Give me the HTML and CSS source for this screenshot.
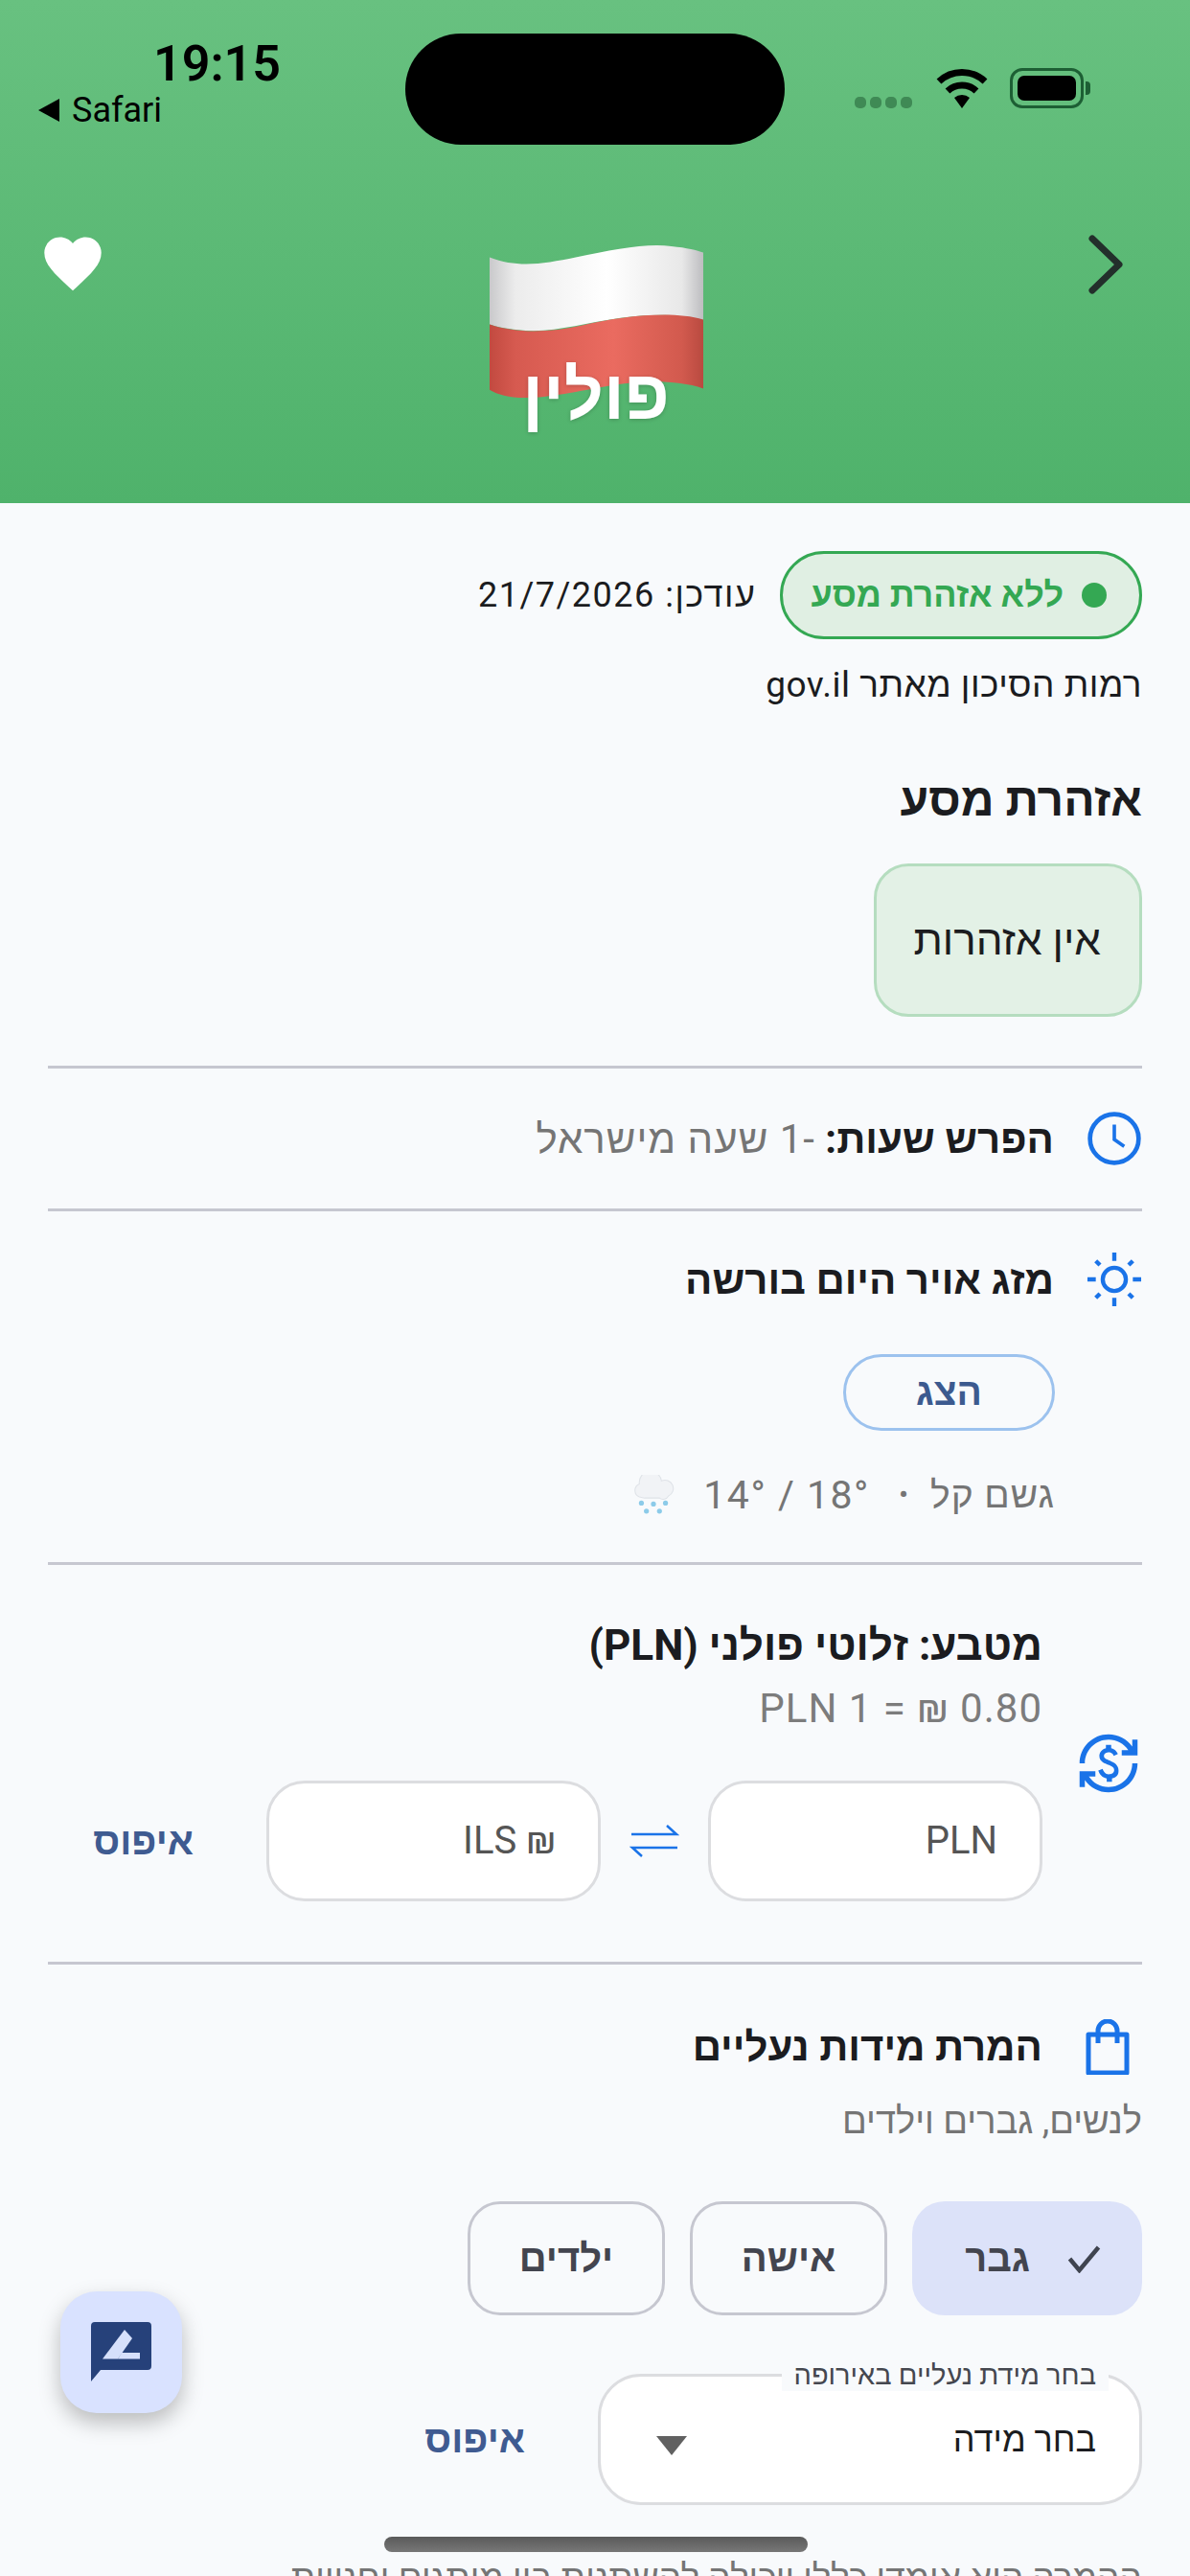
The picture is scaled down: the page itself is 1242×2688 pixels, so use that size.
FILE: index.html
```html
<!DOCTYPE html>
<html lang="he" dir="rtl">
<head>
	<meta charset="utf-8">
	<title>פולין</title>
	<link rel="stylesheet" href="styles.css">
</head>
<body>
<div class="page">
	<header class="top">
		<div class="statusbar">
			<div class="clock-side">
				<div class="time">19:15</div>
				<div class="backlink"><span class="back-tri"></span>Safari</div>
			</div>
			<div class="sys-icons">
				<div class="signal"><i></i><i></i><i></i><i></i></div>
				<svg class="wifi" viewBox="0 0 56 42"><path d="M28 42 20 31a12 12 0 0 1 16 0z" fill="#000"/><path d="M13 24a22 22 0 0 1 30 0" fill="none" stroke="#000" stroke-width="7"/><path d="M4 14a35 35 0 0 1 48 0" fill="none" stroke="#000" stroke-width="7"/></svg>
				<div class="battery"><div class="battery-in"></div></div>
				<div class="battery-nub"></div>
			</div>
		</div>
		<div class="island"></div>
		<div class="hero">
			<svg class="heart" viewBox="0 0 24 24"><path d="M12 22.500 10.300 21C4.600 15.700 0.500 12 0.500 7.300 0.500 3.700 3.400 1 6.800 1c2 0 3.900.9 5.200 2.500C13.300 1.900 15.200 1 17.200 1c3.400 0 6.300 2.700 6.300 6.300 0 4.700-4.100 8.400-9.800 13.700z" fill="#fff"/></svg>
			<div class="hero-mid">
				<svg class="flag" viewBox="210 105 670 485">
					<defs>
						<linearGradient id="fw" x1="0" x2="1" y1="0" y2="0">
							<stop offset="0" stop-color="#c9c9cb"/><stop offset=".12" stop-color="#ececec"/><stop offset=".55" stop-color="#fff"/><stop offset=".9" stop-color="#e8e8e8"/><stop offset="1" stop-color="#bdbdc0"/>
						</linearGradient>
						<linearGradient id="fr" x1="0" x2="1" y1="0" y2="0">
							<stop offset="0" stop-color="#c24a40"/><stop offset=".12" stop-color="#d65a50"/><stop offset=".58" stop-color="#ea6b60"/><stop offset=".9" stop-color="#d25a4e"/><stop offset="1" stop-color="#b94a40"/>
						</linearGradient>
					</defs>
					<path d="M210 145C300 180 380 165 480 145 600 120 700 100 780 110 830 115 860 122 880 130V345C800 320 720 322 620 335 500 352 400 385 300 372 260 368 230 362 210 355z" fill="url(#fw)"/>
					<path d="M210 355C300 385 400 380 500 358 620 330 780 310 880 340V556C800 530 700 530 600 545 480 565 400 585 320 585 270 585 235 575 210 560z" fill="url(#fr)"/>
				</svg>
				<h1 class="country">פולין</h1>
			</div>
			<svg class="chevron" viewBox="0 0 36 62"><path d="M4 4 32 31 4 58" fill="none" stroke="#232f2b" stroke-width="7" stroke-linecap="round" stroke-linejoin="round"/></svg>
		</div>
	</header>

	<main class="content">
		<div class="risk-row">
			<div class="risk-pill"><span class="risk-dot"></span>ללא אזהרת מסע</div>
			<div class="updated">עודכן: 21/7/2026</div>
		</div>
		<p class="risk-note">רמות הסיכון מאתר gov.il</p>
		<h2 class="warn-title">אזהרת מסע</h2>
		<div class="warn-box">אין אזהרות</div>

		<hr class="sep sep-a">
		<div class="info-row time-row">
			<svg class="ico" viewBox="0 0 56 56"><circle cx="28" cy="28" r="24.500" fill="none" stroke="#1a73e8" stroke-width="4.500"/><path d="M28 14v15l10 7" fill="none" stroke="#1a73e8" stroke-width="3.500"/></svg>
			<div class="row-text"><b>הפרש שעות:</b> <span class="gray">-1 שעה מישראל</span></div>
		</div>
		<hr class="sep">
		<div class="weather">
			<div class="info-row weather-head">
				<svg class="ico" viewBox="0 0 60 60"><circle cx="30" cy="30" r="12.500" fill="none" stroke="#1a73e8" stroke-width="4.500"/><g stroke="#1a73e8" stroke-width="4.500"><path d="M30 1v9M30 50v9M1 30h9M50 30h9M10 10l4.500 4.500M45.500 45.500 50 50M10 50l4.500-4.500M45.500 14.500 50 10"/></g></svg>
				<div class="row-text"><b>מזג אויר היום בורשה</b></div>
			</div>
			<div class="weather-body">
				<button class="show-btn">הצג</button>
				<div class="forecast">
					<span>גשם קל</span><span class="bullet">•</span><span class="temps" dir="ltr">14° / 18°</span>
					<svg class="rain" viewBox="0 0 42 40"><path d="M7 22a7 7 0 0 1 0-13 11 11 0 0 1 22-3 8 8 0 0 1 7 15 6 6 0 0 1-9 2H12z" fill="#f1f3f6" stroke="#dfe3e8" stroke-width="1"/><g fill="#8ccbe9"><circle cx="9" cy="28" r="2.500"/><circle cx="21" cy="29" r="2.500"/><circle cx="33" cy="28" r="2.500"/><circle cx="14" cy="36" r="2.500"/><circle cx="27" cy="36" r="2.500"/></g></svg>
				</div>
			</div>
		</div>
		<hr class="sep">
		<div class="currency">
			<svg class="ico-money" viewBox="0 0 24 24"><path fill="#1a73e8" d="M12.890 11.100c-1.780-.59-2.640-.96-2.640-1.900 0-1.020 1.110-1.390 1.810-1.390 1.310 0 1.790.99 1.900 1.340l1.580-.67c-.15-.45-.82-1.920-2.540-2.240V5h-2v1.260c-2.480.56-2.490 2.860-2.490 2.960 0 2.270 2.250 2.910 3.350 3.310 1.580.56 2.280 1.070 2.280 2.030 0 1.130-1.050 1.610-1.980 1.610-1.820 0-2.340-1.870-2.400-2.090l-1.660.67c.63 2.190 2.280 2.780 3.200 2.960V19h2v-1.240c.65-.11 2.520-.49 2.500-2.900.01-1.270-.54-2.770-3.010-3.660zM3 21H1v-6h6v2H4.520c1.610 2.410 4.360 4 7.480 4 4.970 0 9-4.030 9-9h2c0 6.080-4.920 11-11 11-3.720 0-7.010-1.850-9-4.670V21zM1 12C1 5.920 5.920 1 12 1c3.720 0 7.010 1.850 9 4.670V3h2v6h-6V7h2.480C17.870 4.590 15.120 3 12 3c-4.970 0-9 4.030-9 9H1z"/></svg>
			<div class="currency-main">
				<div class="currency-title">מטבע: זלוטי פולני (PLN)</div>
				<div class="currency-rate">0.80 ₪ = 1 PLN</div>
				<div class="converter">
					<div class="amount-box">PLN</div>
					<svg class="swap" viewBox="0 0 52 34"><path d="M2 10h47M39 1l10 9-10 0M50 24H3M13 33 3 24h10" fill="none" stroke="#1a73e8" stroke-width="2.500"/></svg>
					<div class="amount-box">₪ ILS</div>
					<a class="reset reset-cur">איפוס</a>
				</div>
			</div>
		</div>
		<hr class="sep">
		<div class="shoes-head">
			<svg class="ico-bag" viewBox="0 0 48 58"><path d="M4 16h40v40H4z" fill="none" stroke="#1a73e8" stroke-width="5" stroke-linejoin="round"/><path d="M14 25V12a10 10 0 0 1 20 0v13" fill="none" stroke="#1a73e8" stroke-width="5"/></svg>
			<div class="shoes-title">המרת מידות נעליים</div>
		</div>
		<p class="shoes-sub">לנשים, גברים וילדים</p>
		<div class="chips">
			<div class="chip chip-on"><svg class="tick" viewBox="0 0 36 30"><path d="M3 15 13 27 33 3" fill="none" stroke="#3f4450" stroke-width="4.500"/></svg>גבר</div>
			<div class="chip">אישה</div>
			<div class="chip">ילדים</div>
		</div>
		<div class="size-row">
			<div class="size-select">
				<span class="size-label">בחר מידת נעליים באירופה</span>
				<span>בחר מידה</span>
				<span class="caret"></span>
			</div>
			<a class="reset reset-size">איפוס</a>
		</div>
		<p class="shoes-note">ההמרה היא אומדן כללי ויכולה להשתנות בין מותגים וחנויות</p>
	</main>

	<div class="fab">
		<svg viewBox="0 0 64 64"><path d="M4 0h55a4 4 0 0 1 4 4v42a4 4 0 0 1-4 4H10L0 62V4a4 4 0 0 1 4-4z" fill="#26417a"/><path d="M12 38.500 35 8 43 17 28 38.500z" fill="#d6e0fb"/><path d="M32 32H51V38.500H28z" fill="#d6e0fb"/></svg>
	</div>
	<div class="homebar"></div>
</div>
</body>
</html>
```

FILE: styles.css
```css
* {box-sizing: border-box;}
html, body {margin: 0; padding: 0;}
body {font-family: Roboto, "Liberation Sans", sans-serif; color: #1b1c20;}
.page {position: relative; width: 1242px; height: 2688px; overflow: hidden; background-color: #f8fafc;}

/* green top */
.top {position: relative; height: 525px; direction: ltr; background: linear-gradient(#68c180, #4fb26b);}
.statusbar {display: flex; justify-content: space-between; height: 245px; padding: 38px 0 0 40px;}
.time {margin-left: 120px; font-size: 52px; line-height: 58px; font-weight: 600; color: #000;}
.backlink {display: flex; align-items: center; gap: 13px; font-size: 36px; line-height: 38px; color: #000;}
.back-tri {width: 0; height: 0; border-top: 12px solid transparent; border-bottom: 12px solid transparent; border-right: 22px solid #000;}
.sys-icons {display: flex; align-items: flex-end; height: 75px; padding-right: 104px;}
.signal {display: flex; gap: 4px; margin-right: 24px;}
.signal i {width: 12px; height: 12px; border-radius: 5px; background-color: #3f8a55;}
.wifi {width: 56px; height: 42px; margin-right: 22px;}
.battery {width: 77px; height: 42px; padding: 5px; border: 3px solid #1d5f34; border-radius: 13px;}
.battery-in {height: 100%; background-color: #000; border-radius: 7px;}
.battery-nub {width: 5px; height: 14px; margin: 0 0 14px 2px; background-color: #1d5f34; border-radius: 0 4px 4px 0;}
.island {position: absolute; left: 423px; top: 35px; width: 396px; height: 116px; border-radius: 58px; background-color: #000;}
.hero {display: flex; justify-content: space-between; padding: 0 70px 0 44px;}
.heart {width: 64px; height: 62px;}
.chevron {width: 36px; height: 62px;}
.hero-mid {display: flex; flex-direction: column; align-items: center; margin-top: 10px;}
.flag {display: block; width: 223px; height: 162px;}
.country {margin: -44px 0 0; font-size: 72px; line-height: 80px; font-weight: 700; color: #fff; text-shadow: 0 1px 4px rgba(0,0,0,.2);}

/* content */
.content {padding: 50px 50px 0;}
.risk-row {display: flex; align-items: center; gap: 25px;}
.risk-pill {display: flex; align-items: center; gap: 19px; height: 92px; padding: 0 34px 0 29px; border: 3px solid #34a853; border-radius: 46px; background-color: #e0efe3; color: #34a853; font-size: 36px; font-weight: 700;}
.risk-dot {width: 26px; height: 26px; border-radius: 50%; background-color: #34a853;}
.updated {font-size: 36px; letter-spacing: 1.500px;}
.risk-note {margin: 26px 0 0; font-size: 37px; line-height: 44px; letter-spacing: .5px;}
.warn-title {margin: 70px 0 0; font-size: 48px; line-height: 56px; font-weight: 700;}
.warn-box {display: flex; align-items: center; width: 280px; height: 160px; margin-top: 38px; padding: 0 40px; border: 3px solid #b5ddbf; border-radius: 36px; background-color: #e3f1e6; font-size: 44px; white-space: nowrap;}

.sep {height: 3px; margin: 0; border: 0; background-color: #c6c7d0;}
.sep-a {margin-top: 51px;}
.info-row {display: flex; align-items: center; gap: 34px;}
.time-row {height: 146px;}
.ico {width: 58px; height: 58px;}
.row-text {font-size: 42px;}
.row-text b {font-weight: 700;}
.gray {color: #757575; font-size: 42px; letter-spacing: 1px;}
.weather {height: 366px; padding-top: 42px;}
.weather-body {padding: 49px 91px 0 0;}
.show-btn {display: block; width: 221px; height: 80px; padding: 0; border: 3px solid #9cc2ee; border-radius: 40px; background: none; font-family: inherit; font-size: 39px; font-weight: 700; color: #3c5a8f;}
.forecast {display: flex; align-items: center; margin-top: 45px; font-size: 39px; line-height: 44px; color: #757575; letter-spacing: 1px;}
.temps {font-size: 41px; letter-spacing: 1.500px;}
.bullet {margin: 0 22px 0 30px; font-size: 30px;}
.rain {width: 44px; height: 42px; margin-right: 30px;}

.currency {display: flex; align-items: center; height: 414px;}
.ico-money {width: 66px; height: 66px; margin: 0 2px 0 36px; flex: none;}
.currency-main {flex: 1; padding-bottom: 6px;}
.currency-title {font-size: 44px; line-height: 54px; font-weight: 700;}
.currency-rate {margin-top: 14px; font-size: 42px; line-height: 50px; color: #7c7c7c; letter-spacing: 1px;}
.converter {display: flex; align-items: center; margin-top: 50px;}
.amount-box {width: 349px; height: 126px; padding: 0 44px; line-height: 120px; border: 3px solid #dcdde0; border-radius: 40px; background-color: #fff; font-size: 40px; color: #555;}
.swap {width: 52px; height: 34px; margin: 0 30px;}
.reset {font-size: 40px; font-weight: 700; color: #3f5b91;}
.reset-cur {margin-right: 76px;}

.shoes-head {display: flex; align-items: center; gap: 44px; margin-top: 57px; padding-right: 12px;}
.ico-bag {width: 48px; height: 58px;}
.shoes-title {font-size: 42px; font-weight: 700; line-height: 58px;}
.shoes-sub {margin: 26px 0 0; font-size: 38px; line-height: 44px; color: #757575;}
.chips {display: flex; gap: 26px; margin-top: 62px;}
.chip {display: flex; align-items: center; justify-content: center; gap: 26px; width: 206px; height: 119px; border: 3px solid #c6c7d0; border-radius: 34px; font-size: 40px; font-weight: 700; color: #43454f;}
.chip-on {justify-content: flex-start; gap: 38px; width: 240px; padding-right: 42px; border: 0; background-color: #dce2f9;}
.tick {width: 37px; height: 30px;}
.size-row {display: flex; align-items: center; gap: 76px; margin-top: 61px;}
.size-select {position: relative; display: flex; align-items: center; justify-content: space-between; width: 568px; height: 137px; padding: 0 45px 0 108px; border: 3px solid #dcdde0; border-radius: 45px; background-color: #fff; font-size: 36px;}
.size-label {position: absolute; right: 32px; top: -19px; padding: 0 13px; background-color: #f8fafc; font-size: 29px; line-height: 34px; color: #45474f; white-space: nowrap;}
.caret {position: absolute; left: 58px; top: 62px; width: 0; height: 0; border-left: 16px solid transparent; border-right: 16px solid transparent; border-top: 20px solid #616161;}
.shoes-note {margin: 54px 0 0; font-size: 37px; line-height: 44px; color: #757575; white-space: nowrap;}

/* floating stuff */
.fab {position: absolute; left: 63px; top: 2391px; display: flex; align-items: center; justify-content: center; width: 127px; height: 127px; border-radius: 38px; background-color: #d9e2ff; box-shadow: 0 10px 22px rgba(0,0,0,.25);}
.fab svg {width: 64px; height: 64px;}
.homebar {position: absolute; left: 401px; top: 2647px; width: 442px; height: 16px; border-radius: 8px; background: linear-gradient(#5a5a5a, #777);}
```
